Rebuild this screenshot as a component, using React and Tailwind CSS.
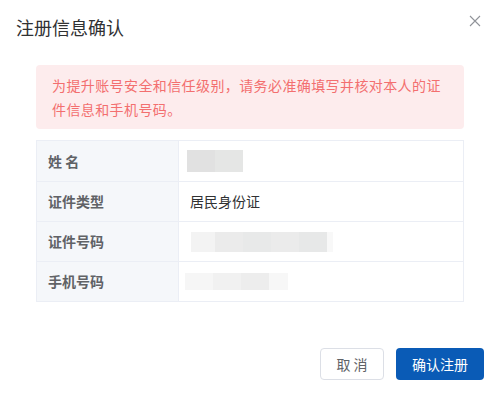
const rows = [
  { label: '姓 名', blur: 'name' },
  { label: '证件类型', value: '居民身份证' },
  { label: '证件号码', blur: 'id' },
  { label: '手机号码', blur: 'phone' },
]

function Blur({ kind }) {
  if (kind === 'name') {
    return (
      <div className="ml-[8px] flex h-[22px] w-[56px]">
        <div className="h-full w-[28px] bg-[#e1e1e1]" />
        <div className="h-full w-[28px] bg-[#e5e6e5]" />
      </div>
    )
  }
  if (kind === 'id') {
    return (
      <div className="ml-[12px] flex h-[20px]">
        <div className="h-full w-[24px] bg-[#f3f3f3]" />
        <div className="h-full w-[28px] bg-[#ebebeb]" />
        <div className="h-full w-[28px] bg-[#e8e9e9]" />
        <div className="h-full w-[28px] bg-[#ebebeb]" />
        <div className="h-full w-[28px] bg-[#e7e8e8]" />
        <div className="h-full w-[6px] bg-[#f8f8f8]" />
      </div>
    )
  }
  return (
    <div className="ml-[6px] flex h-[17px]">
      <div className="h-full w-[28px] bg-[#f6f6f6]" />
      <div className="h-full w-[28px] bg-[#f1f1f1]" />
      <div className="h-full w-[28px] bg-[#ededed]" />
      <div className="h-full w-[19px] bg-[#f7f7f7]" />
    </div>
  )
}

export default function App() {
  return (
    <div
      className="flex h-[396px] w-[500px] flex-col bg-white"
      style={{ fontFamily: '"Noto Sans CJK SC", "Liberation Sans", sans-serif' }}
    >
      <div className="flex items-start justify-between pl-4 pr-[19px] pt-[14px]">
        <h2 className="text-[18px] leading-[26px] text-[#303133]">注册信息确认</h2>
        <button className="mt-[1px] text-[#909399]">
          <svg width="12" height="12" viewBox="0 0 12 12" fill="none" stroke="currentColor" strokeWidth="1.1">
            <path d="M1 1L11 11M11 1L1 11" />
          </svg>
        </button>
      </div>

      <div className="mt-[25px] px-[36px]">
        <div className="rounded-[4px] bg-[#fdeced] px-4 py-2 text-[14px] leading-6 tracking-[0.4px] text-[#f36f6f]">
          为提升账号安全和信任级别，请务必准确填写并核对本人的证件信息和手机号码。
        </div>

        <div className="mt-[11px] border border-[#ebeef5]">
          {rows.map((r, i) => (
            <div key={r.label} className={`flex h-[40px] ${i > 0 ? 'border-t border-[#ebeef5]' : ''}`}>
              <div className="flex w-[142px] shrink-0 items-center border-r border-[#ebeef5] bg-[#f5f7fa] pl-[11px] text-[14px] font-semibold text-[#606266]">
                {r.label}
              </div>
              <div className="flex flex-1 items-center text-[14px] text-[#303133]">
                {r.value ? <span className="pl-[11px]">{r.value}</span> : <Blur kind={r.blur} />}
              </div>
            </div>
          ))}
        </div>
      </div>

      <div className="mt-auto flex justify-end gap-3 px-4 pb-4">
        <button className="h-8 w-[64px] rounded-[4px] border border-[#dcdfe6] text-[14px] text-[#606266]">
          取 消
        </button>
        <button className="h-8 w-[88px] rounded-[4px] bg-[#0a5bb6] text-[14px] text-white">
          确认注册
        </button>
      </div>
    </div>
  )
}
